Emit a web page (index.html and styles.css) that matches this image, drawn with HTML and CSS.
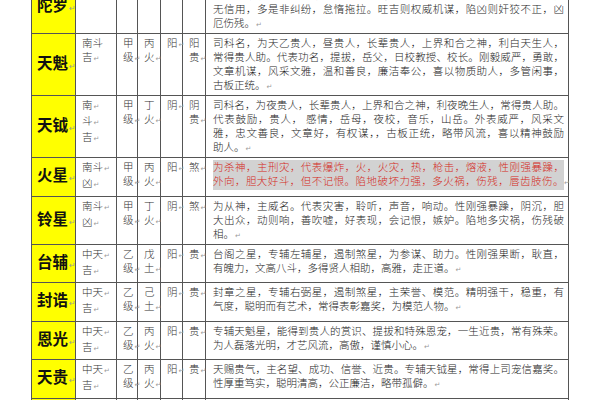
FILE: index.html
```html
<!DOCTYPE html>
<html lang="zh-CN">
<head>
<meta charset="utf-8">
<title>星曜表</title>
<link rel="stylesheet" href="styles.css">
</head>
<body>
<div class="page">
<table class="stars">
<colgroup>
<col class="c-name"><col class="c-dou"><col class="c-grade"><col class="c-wx"><col class="c-yy"><col class="c-type"><col class="c-desc">
</colgroup>
<tbody>
<tr>
<td class="name name-top">陀罗<i class="pm">↵</i></td>
<td class="sm"></td>
<td class="sm"></td>
<td class="sm"></td>
<td class="sm"></td>
<td class="sm"></td>
<td class="desc">
<span class="ln">北斗助星，为暗箭，主是非。代表拖延，纠缠，迟滞，阻碍，性固执多疑，</span>
<span class="ln">城府深沉，暗中计较，不肯认输。化气为忌，遇吉尚可，遇凶则多灾，</span>
<span class="ln">无信用，多是非纠纷，怠惰拖拉。旺吉则权威机谋，陷凶则奸狡不正，凶</span>
<span class="ln last">厄伤残。<i class="pm">↵</i></span>
</td>
</tr>
<tr>
<td class="name">天魁<i class="pm">↵</i></td>
<td class="sm">南斗<br>吉<i class="pm">↵</i></td>
<td class="sm">甲<br>级<i class="pm">↵</i></td>
<td class="sm">丙<br>火<i class="pm">↵</i></td>
<td class="sm">阳<i class="pm">↵</i></td>
<td class="sm">阳<br>贵<i class="pm">↵</i></td>
<td class="desc">
<span class="ln">司科名，为天乙贵人，昼贵人，长辈贵人，上界和合之神，利白天生人，</span>
<span class="ln">常得贵人助。代表功名，提拔，岳父，日校教授、校长。刚毅威严，勇敢，</span>
<span class="ln">文章机谋，风采文雅，温和善良，廉洁奉公，喜以物质助人，多管闲事，</span>
<span class="ln last">古板正统。<i class="pm">↵</i></span>
</td>
</tr>
<tr>
<td class="name">天钺<i class="pm">↵</i></td>
<td class="sm">南<i class="pm">↵</i><br>斗<i class="pm">↵</i><br>吉<i class="pm">↵</i></td>
<td class="sm">甲<br>级<i class="pm">↵</i></td>
<td class="sm">丁<br>火<i class="pm">↵</i></td>
<td class="sm">阴<i class="pm">↵</i></td>
<td class="sm">阴<br>贵<i class="pm">↵</i></td>
<td class="desc">
<span class="ln">司科名，为夜贵人，长辈贵人，上界和合之神，利夜晚生人，常得贵人助。</span>
<span class="ln">代表鼓励，贵人， 感情，岳母，夜校，音乐，山岳。外表威严，风采文</span>
<span class="ln">雅，忠文善良，文章好，有权谋，，古板正统，略带风流，喜以精神鼓励</span>
<span class="ln last">助人。<i class="pm">↵</i></span>
</td>
</tr>
<tr class="r2">
<td class="name">火星<i class="pm">↵</i></td>
<td class="sm">南斗<i class="pm">↵</i><br>凶<i class="pm">↵</i></td>
<td class="sm">甲<br>级<i class="pm">↵</i></td>
<td class="sm">丙<br>火<i class="pm">↵</i></td>
<td class="sm">阳<i class="pm">↵</i></td>
<td class="sm">煞<i class="pm">↵</i></td>
<td class="desc">
<span class="ln hl">为杀神，主刑灾，代表爆炸，火，火灾，热，枪击，熔液，性刚强暴躁，</span>
<span class="ln hl">外向，胆大好斗，但不记恨。陷地破坏力强，多火祸，伤残，唇齿肢伤。<i class="pm hang">↵</i></span>
</td>
</tr>
<tr>
<td class="name">铃星<i class="pm">↵</i></td>
<td class="sm">南斗<i class="pm">↵</i><br>凶<i class="pm">↵</i></td>
<td class="sm">甲<br>级<i class="pm">↵</i></td>
<td class="sm">丁<br>火<i class="pm">↵</i></td>
<td class="sm">阴<i class="pm">↵</i></td>
<td class="sm">煞<i class="pm">↵</i></td>
<td class="desc">
<span class="ln">为从神，主威名。代表灾害，聆听，声音，响动。性刚强暴躁，阴沉，胆</span>
<span class="ln">大出众，动则响，善吹嘘，好表现，会记恨，嫉妒。陷地多灾祸，伤残破</span>
<span class="ln last">相。<i class="pm">↵</i></span>
</td>
</tr>
<tr class="r2">
<td class="name">台辅<i class="pm">↵</i></td>
<td class="sm">中天<i class="pm">↵</i><br>吉<i class="pm">↵</i></td>
<td class="sm">乙<br>级<i class="pm">↵</i></td>
<td class="sm">戊<br>土<i class="pm">↵</i></td>
<td class="sm">阳<i class="pm">↵</i></td>
<td class="sm">贵<i class="pm">↵</i></td>
<td class="desc">
<span class="ln">台阁之星，专辅左辅星，遏制煞星，为参谋、助力。性刚强果断，耿直，</span>
<span class="ln last">有魄力，文高八斗，多得贤人相助，高雅，走正道。<i class="pm">↵</i></span>
</td>
</tr>
<tr class="r2">
<td class="name">封诰<i class="pm">↵</i></td>
<td class="sm">中天<i class="pm">↵</i><br>吉<i class="pm">↵</i></td>
<td class="sm">乙<br>级<i class="pm">↵</i></td>
<td class="sm">己<br>土<i class="pm">↵</i></td>
<td class="sm">阴<i class="pm">↵</i></td>
<td class="sm">贵<i class="pm">↵</i></td>
<td class="desc">
<span class="ln">封章之星，专辅右弼星，遏制煞星，主荣誉、模范。精明强干，稳重，有</span>
<span class="ln last">气度，聪明而有艺术，常得表彰嘉奖，为模范人物。<i class="pm">↵</i></span>
</td>
</tr>
<tr class="r2">
<td class="name">恩光<i class="pm">↵</i></td>
<td class="sm">中天<i class="pm">↵</i><br>吉<i class="pm">↵</i></td>
<td class="sm">乙<br>级<i class="pm">↵</i></td>
<td class="sm">丙<br>火<i class="pm">↵</i></td>
<td class="sm">阳<i class="pm">↵</i></td>
<td class="sm">贵<i class="pm">↵</i></td>
<td class="desc">
<span class="ln">专辅天魁星，能得到贵人的赏识、提拔和特殊恩宠，一生近贵，常有殊荣。</span>
<span class="ln last">为人磊落光明，才艺风流，高傲，谨慎小心。<i class="pm">↵</i></span>
</td>
</tr>
<tr class="r2">
<td class="name">天贵<i class="pm">↵</i></td>
<td class="sm">中天<i class="pm">↵</i><br>吉<i class="pm">↵</i></td>
<td class="sm">乙<br>级<i class="pm">↵</i></td>
<td class="sm">丙<br>火<i class="pm">↵</i></td>
<td class="sm">阳<i class="pm">↵</i></td>
<td class="sm">贵<i class="pm">↵</i></td>
<td class="desc">
<span class="ln">天赐贵气，主名望、成功、信誉、近贵。专辅天钺星，常得上司宠信嘉奖。</span>
<span class="ln last">性厚重笃实，聪明清高，公正廉洁，略带孤僻。<i class="pm">↵</i></span>
</td>
</tr>
<tr class="r2">
<td class="name">天官<i class="pm">↵</i></td>
<td class="sm">中天<i class="pm">↵</i><br>吉<i class="pm">↵</i></td>
<td class="sm">乙<br>级<i class="pm">↵</i></td>
<td class="sm">戊<br>土<i class="pm">↵</i></td>
<td class="sm">阳<i class="pm">↵</i></td>
<td class="sm">贵<i class="pm">↵</i></td>
<td class="desc">
<span class="ln">天赐官位，主地位、身份。专辅天梁星，主升官进职。清高而有卓识，聪</span>
<span class="ln last">明正直，有威望，常得上司提拔。<i class="pm">↵</i></span>
</td>
</tr>
</tbody>
</table>
</div>
</body>
</html>
```

FILE: styles.css
```css
html, body {
  margin: 0;
  padding: 0;
  background: #ffffff;
}

.page {
  width: 600px;
  height: 400px;
  overflow: hidden;
  padding-left: 31px;
  box-sizing: border-box;
  font-family: "Noto Sans CJK SC", "Noto Sans CJK JP", sans-serif;
  color: #1e1e1e;
}

.stars {
  margin-top: -29px;
  width: 537px;
  table-layout: fixed;
  border-collapse: collapse;
}

.c-name { width: 44px; }
.c-dou { width: 41px; }
.c-grade { width: 21px; }
.c-wx { width: 23px; }
.c-yy { width: 22px; }
.c-type { width: 23px; }
.c-desc { width: 363px; }

.stars td {
  border: 1px solid #555555;
  vertical-align: top;
  font-size: 10.5px;
  line-height: 14px;
  font-weight: 300;
}

.r2 { height: 38.5px; }

.name {
  background: #ffff00;
  vertical-align: middle !important;
  padding: 0 0 0 5px;
  font-size: 15.5px !important;
  line-height: 16px !important;
  font-weight: 700 !important;
  color: #111;
  white-space: nowrap;
}

.name-top {
  padding-top: 8px;
}

.sm {
  padding: 2px 0 1px 6px;
  white-space: nowrap;
  overflow: visible;
  color: #333333;
}

.desc {
  padding: 2px 4px 1px 7px;
}

.ln {
  display: block;
  white-space: nowrap;
  text-align: justify;
  text-align-last: justify;
}

.ln.last {
  text-align-last: left;
}

.hl {
  background: #d2d2d2;
  color: #d42a22;
}

.pm {
  font-style: normal;
  font-family: "DejaVu Sans", sans-serif;
  font-size: 7px;
  color: #9a9a9a;
  font-weight: 400;
  margin-left: 1px;
}

.name .pm {
  font-size: 8px;
}

.hang {
  display: inline-block;
  width: 0;
  margin-left: 0;
  background: #ffffff;
}
```
